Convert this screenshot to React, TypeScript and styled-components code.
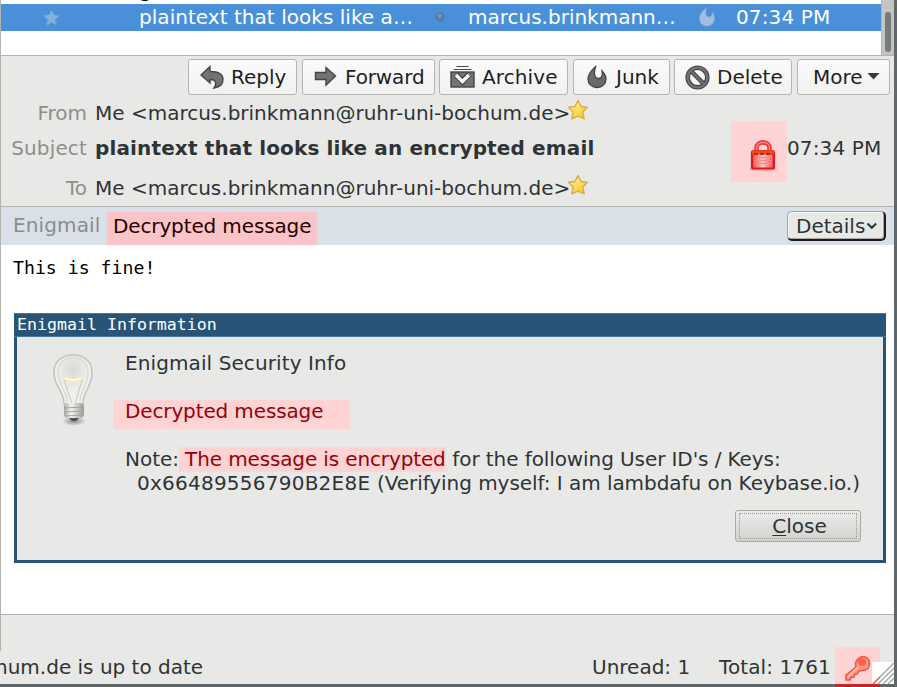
import React from "react";
import styled, { createGlobalStyle } from "styled-components";

const GlobalStyle = createGlobalStyle`
  * { box-sizing: border-box; }
  body { margin: 0; background: #fff; }
`;

const Window = styled.div`
  width: 897px;
  height: 687px;
  display: flex;
  flex-direction: column;
  border-right: 3px solid #5f686b;
  border-bottom: 3px solid #5f676b;
  background: #e8e8e6;
  font-family: "DejaVu Sans", sans-serif;
  font-size: 20px;
  line-height: 24px;
  color: #2e3436;
  white-space: pre;
`;

const Main = styled.div`
  height: 651px;
  flex: none;
  border-left: 1px solid #b3b3b0;
`;

const Text = styled.span<{ $spacing?: number }>`
  flex: none;
  letter-spacing: ${(p) => p.$spacing ?? 0}px;
`;

const MessageList = styled.div`
  display: flex;
  height: 56px;
  border-bottom: 1px solid #b3b3b0;
`;
const Rows = styled.div`
  width: 880px;
  background: #fff;
`;
const ClippedRow = styled.div`
  height: 4px;
  overflow: hidden;
  padding: 0 0 2px 138px;
  display: flex;
  align-items: flex-end;
  color: #000;
`;
const SelectedRow = styled.div`
  height: 27px;
  padding-bottom: 2px;
  display: grid;
  grid-template-columns: 138px 289px 40px 229px 39px 1fr;
  align-items: center;
  background: #4a90d9;
  color: #fff;
`;
const StarCell = styled.div`
  padding-left: 42px;
  height: 16px;
`;
const Track = styled.div`
  width: 13px;
  background: #c4c5c3;
  border-left: 1px solid #b3b3b0;
  padding: 12px 3px 3px 3px;
`;
const Thumb = styled.div`
  width: 6px;
  height: 40px;
  border-radius: 3px;
  background: #777a7b;
`;

const Toolbar = styled.div`
  display: flex;
  height: 41px;
  padding: 3px 4px 2px 187px;
`;
const ToolButton = styled.button<{ $w: number; $after: number; $pad: number; $gap?: number }>`
  flex: none;
  width: ${(p) => p.$w}px;
  height: 36px;
  margin: 0 ${(p) => p.$after}px 0 0;
  padding: 0 0 0 ${(p) => p.$pad}px;
  display: flex;
  align-items: center;
  gap: ${(p) => p.$gap ?? 6}px;
  border: 1px solid #b5b5b3;
  border-radius: 3px;
  background: linear-gradient(#fbfbfb, #f1f1f1);
  font: inherit;
  color: #1e1e1e;
`;

const Header = styled.section`
  display: flex;
  height: 110px;
  border-bottom: 1px solid #b3b3b0;
`;
const Fields = styled.div`
  width: 730px;
  display: grid;
  grid-template-columns: 86px 1fr;
  grid-template-rows: 35px 40px 30px;
  column-gap: 8px;
  padding-top: 4px;
`;
const Label = styled.div`
  text-align: right;
  color: #8e8f8b;
`;
const Value = styled.div<{ $bold?: boolean }>`
  display: flex;
  gap: 0;
  font-weight: ${(p) => (p.$bold ? 700 : 400)};
`;
const LockMark = styled.div`
  width: 56px;
  height: 61px;
  margin-top: 24px;
  padding: 16px 0 0 17px;
  background: #fdd3d3;
`;
const Time = styled.div`
  padding-top: 39px;
  letter-spacing: 0.12px;
`;

const StatusStrip = styled.div`
  display: flex;
  height: 38px;
  background: #d9e0e8;
`;
const StripLabel = styled.div`
  width: 106px;
  padding: 6px 0 0 12px;
  letter-spacing: 0.12px;
  color: #8b8e8b;
`;
const StripMark = styled.div`
  width: 210px;
  margin-top: 5px;
  padding: 2px 0 0 6px;
  letter-spacing: -0.13px;
  background: #fbc5c7;
  color: #260000;
`;
const DetailsButton = styled.button`
  width: 99px;
  height: 30px;
  margin: 4px 0 0 470px;
  padding: 0 0 0 8px;
  display: flex;
  align-items: center;
  border: 1px solid #a3a39f;
  border-right: 2px solid #1b1b1b;
  border-bottom: 2px solid #1b1b1b;
  border-radius: 5px;
  box-shadow: inset -1px -1px 0 #aaa9a6, inset 1px 1px 0 #f7f7f6;
  background: #e8e8e6;
  font: inherit;
  color: #2e3436;
`;

const Body = styled.div`
  height: 370px;
  background: #fff;
  border-bottom: 1px solid #b3b3b0;
  padding: 12px 8px 0 13px;
`;
const Plain = styled.div`
  height: 56px;
  margin-left: -1px;
  font-family: "DejaVu Sans Mono", monospace;
  font-size: 18.2px;
  line-height: 22px;
  color: #000;
`;
const Dialog = styled.div`
  width: 872px;
  height: 250px;
  border: 3px solid #285577;
  border-top: 0;
  background: #e8e8e6;
`;
const DialogTitle = styled.div`
  height: 24px;
  margin: 0 -3px;
  padding-left: 3px;
  background: #285577;
  border-top: 1px solid #47779d;
  border-bottom: 1px solid #47779d;
  font-family: "DejaVu Sans Mono", monospace;
  font-size: 16.6px;
  line-height: 21px;
  color: #fff;
`;
const DialogContent = styled.div`
  display: flex;
  height: 173px;
`;
const BulbCell = styled.div`
  width: 96px;
  padding: 15px 0 0 33px;
`;
const Lines = styled.div`
  padding-top: 14px;
`;
const Line = styled.div<{ $indent?: number }>`
  display: flex;
  height: 24px;
  padding-left: ${(p) => 12 + (p.$indent ?? 0)}px;
`;
const MarkedLine = styled.div`
  width: 237px;
  height: 29px;
  margin: 25px 0 18px;
  padding-left: 12px;
  line-height: 22px;
  letter-spacing: -0.13px;
  background: #fdd3d3;
  color: #970006;
`;
const InlineMark = styled.span`
  width: 267px;
  height: 25px;
  padding-left: 6px;
  letter-spacing: -0.13px;
  background: #fdd3d3;
  color: #970006;
`;
const CloseButton = styled.button`
  width: 126px;
  height: 32px;
  margin: 0 0 0 718px;
  padding: 2px;
  border: 1px solid #a9a9a6;
  border-radius: 3px;
  background: linear-gradient(#ebebea, #d2d2cf);
  font: inherit;
  color: #2e3436;
`;
const Focus = styled.span`
  display: block;
  height: 26px;
  margin: 0 1px;
  border: 1px dotted #9b9b98;
  line-height: 24px;
  padding-left: 3px;
`;
const Mnemonic = styled.span`
  text-decoration: underline;
  text-decoration-thickness: 1px;
  text-underline-offset: 2px;
`;

const StatusBar = styled.footer`
  height: 33px;
  display: flex;
  align-items: flex-start;
  flex: none;
`;
const StatusText = styled.div<{ $w: number; $shift?: number }>`
  flex: none;
  width: ${(p) => p.$w}px;
  padding-top: 4px;
  text-indent: ${(p) => p.$shift ?? 0}px;
`;

const Icon = styled.svg`
  display: block;
  flex: none;
`;
const StarIcon = styled(Icon)`
  margin: -2px 0 0 -3px;
`;
const KeyCorner = styled(Icon)`
  margin-top: -4px;
`;

const StarFilled = () => (
  <StarIcon width="22" height="23" viewBox="0 0 22 23">
    <defs>
      <linearGradient id="star" x1="0" y1="0" x2=".6" y2="1">
        <stop offset="0" stopColor="#fff8a0" />
        <stop offset="1" stopColor="#f8ca2c" />
      </linearGradient>
    </defs>
    <path d="M11 1.500l3 6 6.300.8-4.500 4.800 1.400 6.800-6.200-2.800-6.200 2.800 1.300-6.800L1.600 8.300l6.400-.8z" fill="url(#star)" stroke="#dcab4c" strokeWidth="1.4" strokeLinejoin="round" />
  </StarIcon>
);

const address = "Me <marcus.brinkmann@ruhr-uni-bochum.de>";

export default function App() {
  return (
    <>
      <GlobalStyle />
      <Window>
        <Main>
          <MessageList>
            <Rows>
              <ClippedRow><Text>g</Text></ClippedRow>
              <SelectedRow>
                <StarCell>
                  <Icon width="17" height="17" viewBox="0 0 16 16">
                    <path d="M8 .7l2.200 4.800 5.300.6-3.900 3.700 1 5.400L8 12.600l-4.600 2.600 1-5.400L.5 6.100l5.300-.6z" fill="#83b1e1" stroke="#69a0d8" strokeWidth=".8" />
                  </Icon>
                </StarCell>
                <Text $spacing={0.04}>plaintext that looks like a…</Text>
                <Icon width="40" height="12" viewBox="0 0 40 12">
                  <circle cx="12" cy="6" r="4.200" fill="#557ea8" stroke="#4779ad" strokeWidth="1" />
                  <circle cx="11.500" cy="4.800" r="2.200" fill="#7495b8" />
                </Icon>
                <Text>marcus.brinkmann…</Text>
                <Icon width="20" height="21" viewBox="0 0 20 21">
                  <path d="M10 1C7 4 2.500 7 2.500 13c0 4.500 3.500 7 7.500 7s7.500-3 7.500-7c0-3-1-5-2-7-.5 3-1.500 5-3.500 5-3.500 0-4-5-2-10z" fill="#a0bfdf" stroke="#77a9dc" />
                </Icon>
                <Text $spacing={0.12}>07:34 PM</Text>
              </SelectedRow>
            </Rows>
            <Track><Thumb /></Track>
          </MessageList>

          <Toolbar>
            <ToolButton $w={109} $after={5} $pad={11}>
              <Icon width="25" height="26" viewBox="0 0 25 26">
                <path d="M1 11L10 2.500v5c8 0 13 2.500 13 8 0 4.500-3 7.500-9 8.500 2.500-3.500 3-8.500-4-8.500V19z" fill="#737373" stroke="#454545" strokeWidth="1.400" />
              </Icon>
              <Text>Reply</Text>
            </ToolButton>
            <ToolButton $w={133} $after={4} $pad={11}>
              <Icon width="25" height="24" viewBox="0 0 25 24">
                <path d="M1.500 7.500h10.500V2.500l9.500 8.500-9.500 9v-5.500H1.500z" fill="#737373" stroke="#454545" strokeWidth="1.400" />
              </Icon>
              <Text $spacing={-0.14}>Forward</Text>
            </ToolButton>
            <ToolButton $w={129} $after={5} $pad={10} $gap={7}>
              <Icon width="25" height="24" viewBox="0 0 25 24">
                <path d="M6.500 1.500h12M3.500 4.500h18" stroke="#454545" strokeWidth="1.200" />
                <rect x="1" y="7" width="23" height="15" fill="#737373" stroke="#454545" strokeWidth="1.400" />
                <path d="M6 9.500l6.500 7 6.500-7" fill="none" stroke="#454545" strokeWidth="6" />
                <path d="M6 10l6.500 6.500L19 10" fill="none" stroke="#fff" strokeWidth="3.400" />
              </Icon>
              <Text $spacing={0.12}>Archive</Text>
            </ToolButton>
            <ToolButton $w={97} $after={4} $pad={12} $gap={7}>
              <Icon width="23" height="24" viewBox="0 0 23 24">
                <path d="M10 1C7 4 2 8 2 14c0 5 4 8.500 9 8.500s9-3.500 9-8.500c0-3-2-6-4-8 .8 4 0 7.500-3 7.500-4.500 0-6-5-3-12.500z" fill="#6b6b6b" stroke="#444" strokeWidth="1.300" />
              </Icon>
              <Text>Junk</Text>
            </ToolButton>
            <ToolButton $w={118} $after={5} $pad={10} $gap={7}>
              <Icon width="25" height="25" viewBox="0 0 25 25">
                <circle cx="12.500" cy="12.500" r="9.800" fill="none" stroke="#454545" strokeWidth="4.600" />
                <path d="M5.500 5.500l14 14" stroke="#454545" strokeWidth="4.500" />
                <circle cx="12.500" cy="12.500" r="9.800" fill="none" stroke="#737373" strokeWidth="2.200" />
                <path d="M5.500 5.500l14 14" stroke="#737373" strokeWidth="2.200" />
              </Icon>
              <Text>Delete</Text>
            </ToolButton>
            <ToolButton $w={93} $after={0} $pad={15} $gap={0}>
              <Text>More</Text>
              <Icon width="18" height="14" viewBox="0 0 18 14">
                <path d="M4.500 3h12l-6 6.500z" fill="#2e3b45" />
              </Icon>
            </ToolButton>
          </Toolbar>

          <Header>
            <Fields>
              <Label>From</Label>
              <Value><Text>{address}</Text><StarFilled /></Value>
              <Label><Text $spacing={0.15}>Subject</Text></Label>
              <Value $bold><Text $spacing={0.14}>plaintext that looks like an encrypted email</Text></Value>
              <Label>To</Label>
              <Value><Text>{address}</Text><StarFilled /></Value>
            </Fields>
            <LockMark>
              <Icon width="30" height="36" viewBox="0 0 30 36">
                <defs>
                  <linearGradient id="lock" x1="0" x2="1">
                    <stop offset="0" stopColor="#f04a4a" />
                    <stop offset=".5" stopColor="#ffc4c4" />
                    <stop offset="1" stopColor="#f04a4a" />
                  </linearGradient>
                </defs>
                <ellipse cx="15" cy="32" rx="14" ry="2.500" fill="#f6b1b1" />
                <path d="M8.500 14V11c0-7.500 13-7.500 13 0v3" fill="none" stroke="#f53a3a" strokeWidth="4.600" />
                <path d="M8.500 14v-3c0-7.500 13-7.500 13 0v3" fill="none" stroke="#ff8e8e" strokeWidth="1.300" />
                <rect x="4" y="14" width="22" height="17.500" rx="1.500" fill="url(#lock)" stroke="#e0181c" strokeWidth="2.200" />
                <path d="M4 15.500h22" stroke="#ef4f18" strokeWidth="4" />
                <path d="M6 16.800h19" stroke="#a32306" strokeWidth="1.800" strokeDasharray="4 2" />
                <path d="M6 20.500h18M6 23.500h18M6 26.500h18" stroke="#f28b8b" strokeWidth="1" />
              </Icon>
            </LockMark>
            <Time>07:34 PM</Time>
          </Header>

          <StatusStrip>
            <StripLabel>Enigmail</StripLabel>
            <StripMark>Decrypted message</StripMark>
            <DetailsButton>
              <Text>Details</Text>
              <Icon width="14" height="12" viewBox="0 0 14 12">
                <path d="M2.500 3.500l4.300 4.300 4.300-4.300" fill="none" stroke="#2e3436" strokeWidth="2" />
              </Icon>
            </DetailsButton>
          </StatusStrip>

          <Body>
            <Plain>This is fine!</Plain>
            <Dialog>
              <DialogTitle>Enigmail Information</DialogTitle>
              <DialogContent>
                <BulbCell>
                  <Icon width="46" height="76" viewBox="0 0 46 76">
                    <defs>
                      <radialGradient id="bulb" cx=".48" cy=".3">
                        <stop offset="0" stopColor="#d9d9d8" />
                        <stop offset="1" stopColor="#f1f1f0" />
                      </radialGradient>
                      <linearGradient id="cap" x1="0" x2="1">
                        <stop offset="0" stopColor="#a4a8a2" />
                        <stop offset=".35" stopColor="#f5f5f3" />
                        <stop offset="1" stopColor="#999c96" />
                      </linearGradient>
                      <radialGradient id="shade">
                        <stop offset="0" stopColor="#888" />
                        <stop offset="1" stopColor="#888" stopOpacity="0" />
                      </radialGradient>
                    </defs>
                    <ellipse cx="24" cy="69" rx="12" ry="5" fill="url(#shade)" />
                    <path d="M14 52C14 38 4 35 4 21 4 9 12 3 23 3s19 6 19 18c0 14-9 17-9 31z" fill="url(#bulb)" stroke="#c2c2bf" strokeWidth="1.500" />
                    <path d="M17 50C17 38 8 34 8 21 8 10 14 6 23 6s15 5 15 15c0 13-8 17-8 29" fill="none" stroke="#d6d6d3" strokeWidth="1.200" />
                    <path d="M14 28l8 24M32 28L25 52" fill="none" stroke="#c6c6c3" strokeWidth="1" />
                    <path d="M14 25.500c4 4 14 4 18 0" fill="none" stroke="#f3ecb0" strokeWidth="3.200" strokeLinecap="round" />
                    <path d="M15 25.800c4 3 12 3 16 0" fill="none" stroke="#fffef0" strokeWidth="1.400" />
                    <rect x="14" y="51" width="20" height="15" rx="4" fill="url(#cap)" />
                    <path d="M14 56l20-1M14 60l20-1M15 64l18-1" stroke="#a0a39e" strokeWidth="1" />
                    <path d="M19 66h10l-3 3h-4z" fill="#4b5051" />
                  </Icon>
                </BulbCell>
                <Lines>
                  <Line><Text $spacing={0.1}>Enigmail Security Info</Text></Line>
                  <MarkedLine>Decrypted message</MarkedLine>
                  <Line>
                    <Text>Note:</Text>
                    <InlineMark>The message is encrypted</InlineMark>
                    <Text $spacing={-0.09}>{" for the following User ID's / Keys:"}</Text>
                  </Line>
                  <Line $indent={12}>
                    <Text $spacing={0.24}>{"0x66489556790B2E8E "}</Text>
                    <Text $spacing={-0.05}>(Verifying myself: I am lambdafu on Keybase.io.)</Text>
                  </Line>
                </Lines>
              </DialogContent>
              <CloseButton><Focus><Mnemonic>C</Mnemonic>lose</Focus></CloseButton>
            </Dialog>
          </Body>
        </Main>

        <StatusBar>
          <StatusText $w={592} $shift={-5}>hum.de is up to date</StatusText>
          <StatusText $w={127}>Unread: 1</StatusText>
          <StatusText $w={116}><Text $spacing={0.1}>Total: 1761</Text></StatusText>
          <KeyCorner width="59" height="40" viewBox="0 0 59 40">
            <rect width="45" height="37" fill="#fdd3d3" />
            <rect y="37" width="45" height="3" fill="#c42529" />
            <path d="M21 20c-2-6 4-12 9-10 6 2 6 11 0 13-3 1-4 0-6 1l-2 3h-2l-1 3-3 .5-1 2.500h-4v-5z" fill="#ff9a86" stroke="#f9503f" strokeWidth="1.500" />
            <circle cx="27" cy="15" r="4" fill="#fb624d" />
            <path d="M13 30l10-10" stroke="#ffc3b7" strokeWidth="1.500" />
            <rect x="37" y="15" width="22" height="22" fill="#fff" />
            <path d="M45 30l14-14M43 37l16-16M48 37l11-11M53 37l6-6" stroke="#a7a8a5" strokeWidth="1.500" />
            <path d="M38 37l7-7" stroke="#ef5050" strokeWidth="1.500" />
          </KeyCorner>
        </StatusBar>
      </Window>
    </>
  );
}
